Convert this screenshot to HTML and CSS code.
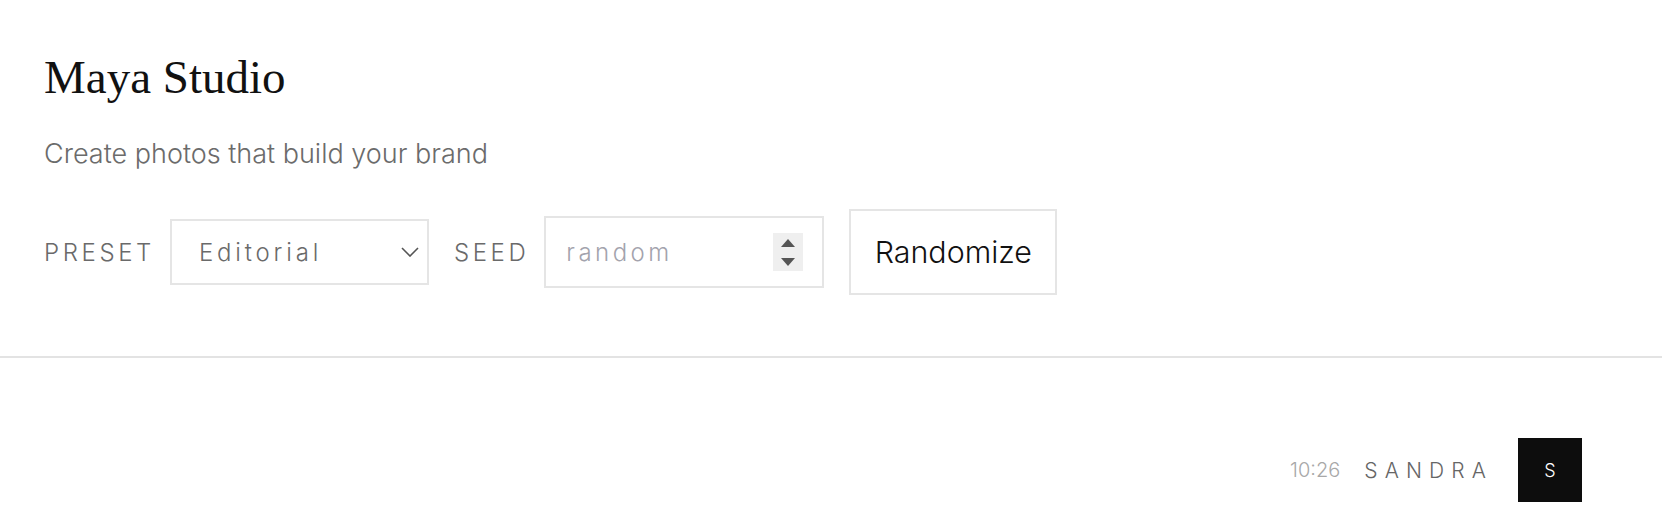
FILE: index.html
```html
<!DOCTYPE html>
<html lang="en">
<head>
<meta charset="utf-8">
<title>Maya Studio</title>
<link rel="stylesheet" href="styles.css">
</head>
<body>
<header class="top">
  <h1 class="title">Maya Studio</h1>
  <p class="subtitle">Create photos that build your brand</p>
  <div class="controls">
    <div class="group">
      <label class="label" for="preset">PRESET</label>
      <div class="select-wrap">
        <select id="preset" class="select">
          <option>Editorial</option>
          <option>Lifestyle</option>
          <option>Studio</option>
        </select>
        <svg class="chevron" width="18" height="10" viewBox="0 0 18 10" aria-hidden="true"><path d="M1 1 L9 9 L17 1" fill="none" stroke="#555" stroke-width="1.6"/></svg>
      </div>
    </div>
    <div class="group">
      <label class="label" for="seed">SEED</label>
      <div class="input-wrap">
        <input id="seed" class="seed" type="number" placeholder="random">
        <div class="spin" aria-hidden="true">
          <span class="tri tri-up"></span>
          <span class="tri tri-down"></span>
        </div>
      </div>
    </div>
    <button class="btn" type="button">Randomize</button>
  </div>
</header>
<main class="chat">
  <div class="msg-head">
    <span class="time">10:26</span>
    <span class="name">SANDRA</span>
    <span class="avatar">S</span>
  </div>
</main>
</body>
</html>
```
FILE: styles.css
```css
html, body {
  margin: 0;
  padding: 0;
  background: #ffffff;
}
body {
  font-family: Inter, "Noto Sans", sans-serif;
  font-weight: 300;
  color: #111;
}
.top {
  padding: 50px 44px 61px 44px;
  border-bottom: 2px solid #e3e3e3;
}
.title {
  margin: 0;
  font-family: "Liberation Serif", "Times New Roman", serif;
  font-weight: 400;
  font-size: 47px;
  line-height: normal;
  color: #111;
}
.subtitle {
  margin: 33px 0 0 0;
  font-size: 27px;
  line-height: normal;
  color: #6b6b6b;
}
.controls {
  margin-top: 39px;
  display: flex;
  align-items: center;
  gap: 25px;
}
.group {
  display: flex;
  align-items: center;
  gap: 15px;
}
.label {
  font-size: 24px;
  letter-spacing: 0.15em;
  color: #6a6a6a;
}
.select-wrap, .input-wrap {
  position: relative;
}
.select {
  appearance: none;
  -webkit-appearance: none;
  display: block;
  box-sizing: border-box;
  width: 259px;
  height: 66px;
  margin: 0;
  padding: 0 40px 0 27px;
  border: 2px solid #e5e5e5;
  border-radius: 0;
  background: #fff;
  font-family: inherit;
  font-weight: inherit;
  font-size: 24px;
  letter-spacing: 0.16em;
  color: #6a6a6a;
  outline: none;
}
.chevron {
  position: absolute;
  right: 10px;
  top: 28px;
  pointer-events: none;
}
.seed {
  appearance: textfield;
  -moz-appearance: textfield;
  display: block;
  box-sizing: border-box;
  width: 280px;
  height: 72px;
  margin: 0;
  padding: 0 60px 0 20px;
  border: 2px solid #e5e5e5;
  border-radius: 0;
  background: #fff;
  font-family: inherit;
  font-weight: inherit;
  font-size: 24px;
  letter-spacing: 0.145em;
  color: #333;
  outline: none;
}
.seed::-webkit-inner-spin-button,
.seed::-webkit-outer-spin-button {
  -webkit-appearance: none;
  margin: 0;
}
.seed::placeholder {
  color: #a3a3ad;
}
.spin {
  position: absolute;
  right: 21px;
  top: 17px;
  width: 30px;
  height: 38px;
  background: #efefef;
  display: flex;
  flex-direction: column;
  align-items: center;
  justify-content: center;
  gap: 11px;
}
.tri {
  width: 0;
  height: 0;
  border-left: 7px solid transparent;
  border-right: 7px solid transparent;
}
.tri-up {
  border-bottom: 8px solid #555;
}
.tri-down {
  border-top: 8px solid #555;
}
.btn {
  box-sizing: border-box;
  height: 86px;
  width: 208px;
  margin: 0;
  padding: 0;
  border: 2px solid #e5e5e5;
  border-radius: 0;
  background: #fff;
  font-family: inherit;
  font-weight: inherit;
  font-size: 30.4px;
  color: #111;
}
.chat {
  padding: 80px 80px 20px 44px;
}
.msg-head {
  display: flex;
  justify-content: flex-end;
  align-items: center;
}
.time {
  font-size: 20px;
  color: #a8a8a8;
  margin-right: 24px;
}
.name {
  font-size: 21px;
  letter-spacing: 0.34em;
  color: #666;
  margin-right: 25px;
}
.avatar {
  width: 64px;
  height: 64px;
  background: #0d0d0d;
  color: #fff;
  font-size: 18px;
  display: flex;
  align-items: center;
  justify-content: center;
}
```
